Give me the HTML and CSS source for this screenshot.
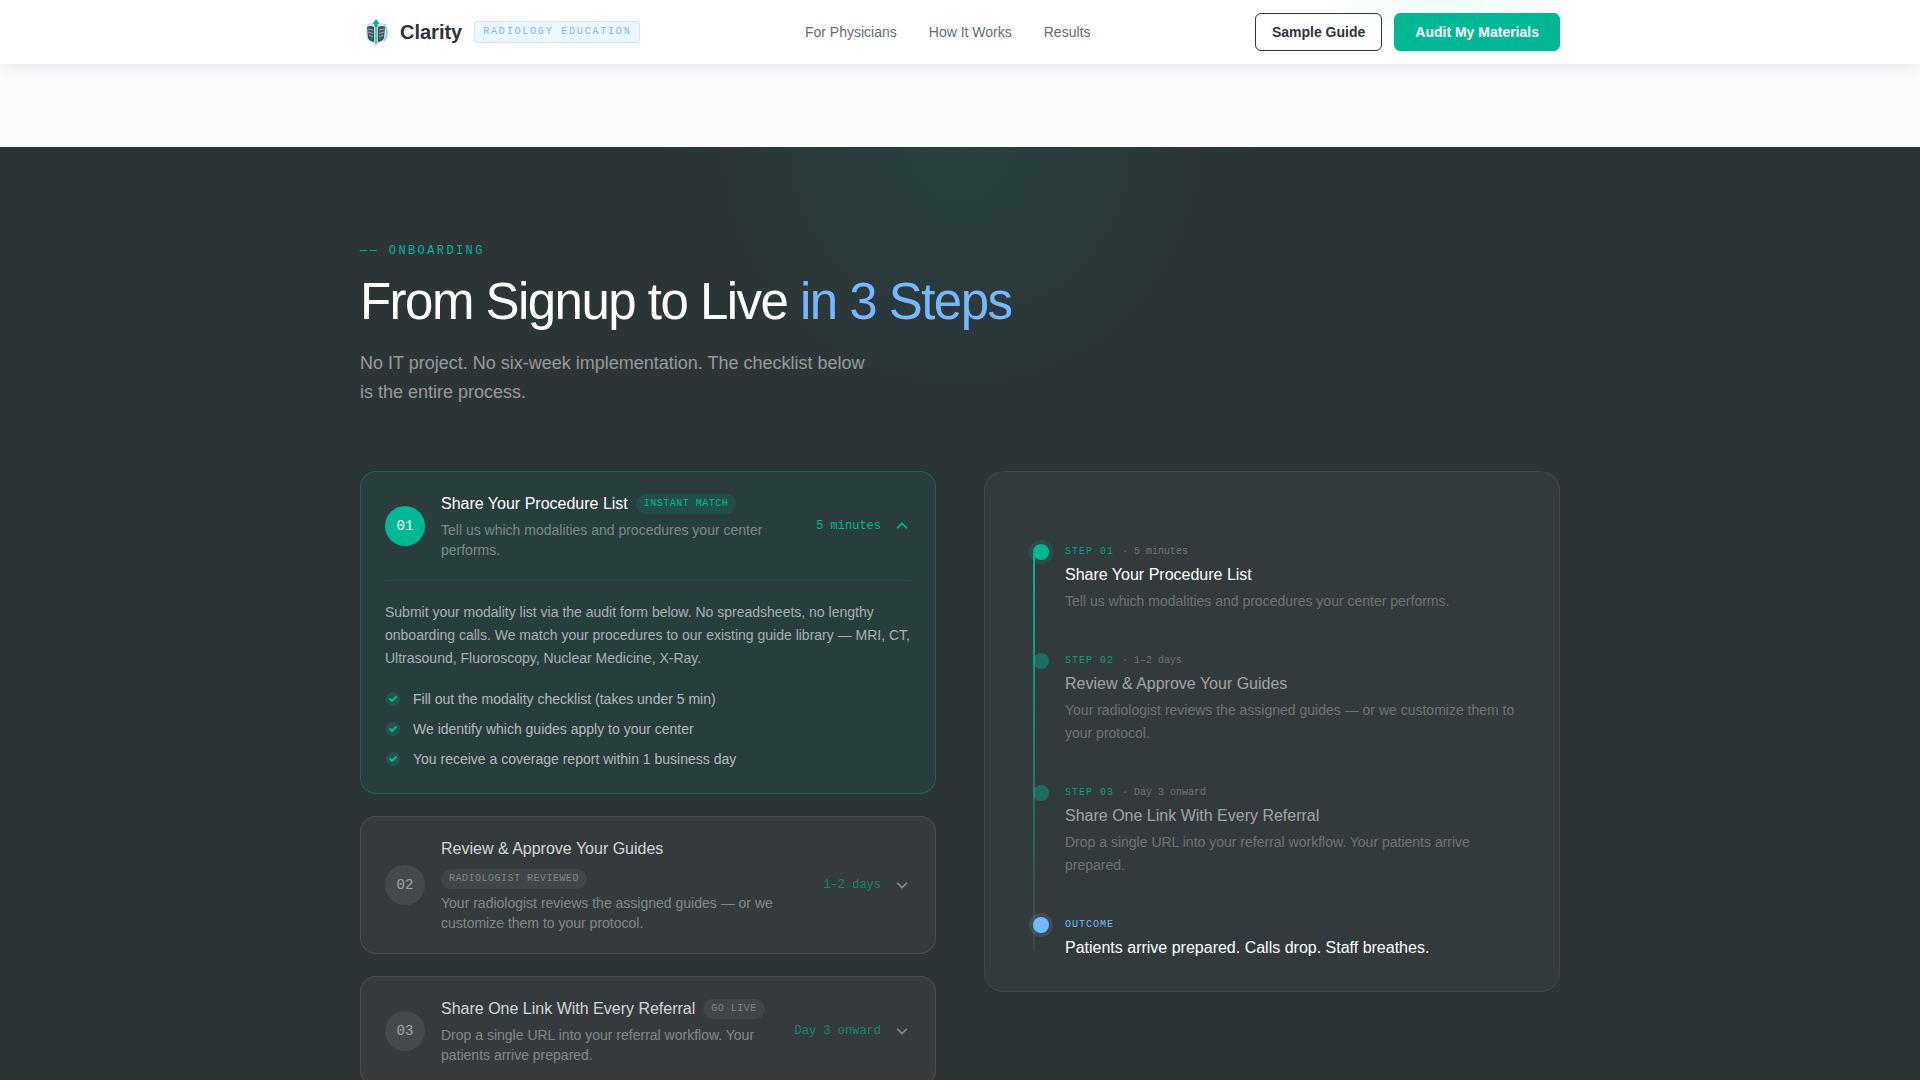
FILE: index.html
```html
<!DOCTYPE html>
<html lang="en">
<head>
    <meta charset="utf-8">
    <title>Clarity</title>
    <link rel="stylesheet" href="styles.css">
</head>
<body>
    <header class="site-header">
        <div class="container header-row">
            <a class="brand" href="#">
                <svg class="brand-logo" viewBox="0 0 32 32" aria-hidden="true">
                    <path d="M16 4 L25 8 Q30 16 26 24 L16 28 L7 24 Q5 16 7 8 Z" fill="#c9ecf4"/>
                    <path d="M24 8 Q30 16 24 25" fill="none" stroke="#93cdea" stroke-width="1.500"/>
                    <path d="M7 11 Q10 9 14 11 V26 Q9 25 8 22 Z M18 11 Q22 9 25 11 L24 22 Q23 25 18 26 Z" fill="#44535b"/>
                    <path d="M8 13 l5 1 M8 16 l5 1.500 M9 19 l4 2 M24 13 l-5 1 M24 16 l-5 1.500 M23 19 l-4 2" stroke="#a3b3ba" stroke-width="1"/>
                    <path d="M15 9 h2.500 V27 L16 29 L14.500 27 Z" fill="#5cc4b8"/>
                    <path d="M16 3 l3.500 5 h-2 v3 h-3 v-3 h-2 Z" fill="#1da893"/>
                </svg>
                <span class="brand-name">Clarity</span>
                <span class="brand-tag">RADIOLOGY EDUCATION</span>
            </a>
            <nav class="main-nav">
                <a href="#physicians">For Physicians</a>
                <a href="#how">How It Works</a>
                <a href="#results">Results</a>
            </nav>
            <div class="header-actions">
                <button class="btn btn-outline">Sample Guide</button>
                <button class="btn btn-primary">Audit My Materials</button>
            </div>
        </div>
    </header>

    <main>
        <section class="onboarding" id="how">
            <div class="container">
                <p class="eyebrow">—— ONBOARDING</p>
                <h2 class="heading">From Signup to Live <span>in 3 Steps</span></h2>
                <p class="subheading">No IT project. No six-week implementation. The checklist below is the entire process.</p>

                <div class="columns">
                    <div class="steps">
                        <article class="step active">
                            <button class="step-head" aria-expanded="true">
                                <span class="step-num">01</span>
                                <span class="step-text">
                                    <span class="step-title-row">
                                        <span class="step-title">Share Your Procedure List</span>
                                        <span class="pill">INSTANT MATCH</span>
                                    </span>
                                    <span class="step-desc">Tell us which modalities and procedures your center performs.</span>
                                </span>
                                <span class="step-time">5 minutes</span>
                                <svg class="chevron" viewBox="0 0 16 16" aria-hidden="true"><path d="M3 10 l5 -5 l5 5"/></svg>
                            </button>
                            <div class="step-body">
                                <p>Submit your modality list via the audit form below. No spreadsheets, no lengthy onboarding calls. We match your procedures to our existing guide library — MRI, CT, Ultrasound, Fluoroscopy, Nuclear Medicine, X-Ray.</p>
                                <ul class="checklist">
                                    <li><svg viewBox="0 0 16 16" aria-hidden="true"><circle cx="8" cy="8" r="7"/><path d="M5 8 l2 2 l4 -4"/></svg>Fill out the modality checklist (takes under 5 min)</li>
                                    <li><svg viewBox="0 0 16 16" aria-hidden="true"><circle cx="8" cy="8" r="7"/><path d="M5 8 l2 2 l4 -4"/></svg>We identify which guides apply to your center</li>
                                    <li><svg viewBox="0 0 16 16" aria-hidden="true"><circle cx="8" cy="8" r="7"/><path d="M5 8 l2 2 l4 -4"/></svg>You receive a coverage report within 1 business day</li>
                                </ul>
                            </div>
                        </article>

                        <article class="step">
                            <button class="step-head" aria-expanded="false">
                                <span class="step-num">02</span>
                                <span class="step-text">
                                    <span class="step-title-row">
                                        <span class="step-title">Review &amp; Approve Your Guides</span>
                                        <span class="pill">RADIOLOGIST REVIEWED</span>
                                    </span>
                                    <span class="step-desc">Your radiologist reviews the assigned guides — or we customize them to your protocol.</span>
                                </span>
                                <span class="step-time">1–2 days</span>
                                <svg class="chevron" viewBox="0 0 16 16" aria-hidden="true"><path d="M3 6 l5 5 l5 -5"/></svg>
                            </button>
                        </article>

                        <article class="step">
                            <button class="step-head" aria-expanded="false">
                                <span class="step-num">03</span>
                                <span class="step-text">
                                    <span class="step-title-row">
                                        <span class="step-title">Share One Link With Every Referral</span>
                                        <span class="pill">GO LIVE</span>
                                    </span>
                                    <span class="step-desc">Drop a single URL into your referral workflow. Your patients arrive prepared.</span>
                                </span>
                                <span class="step-time">Day 3 onward</span>
                                <svg class="chevron" viewBox="0 0 16 16" aria-hidden="true"><path d="M3 6 l5 5 l5 -5"/></svg>
                            </button>
                        </article>
                    </div>

                    <ol class="timeline">
                        <li class="current">
                            <span class="dot"></span>
                            <div>
                                <p class="meta"><span>STEP 01</span>· 5 minutes</p>
                                <h3>Share Your Procedure List</h3>
                                <p class="desc">Tell us which modalities and procedures your center performs.</p>
                            </div>
                        </li>
                        <li>
                            <span class="dot"></span>
                            <div>
                                <p class="meta"><span>STEP 02</span>· 1–2 days</p>
                                <h3>Review &amp; Approve Your Guides</h3>
                                <p class="desc">Your radiologist reviews the assigned guides — or we customize them to your protocol.</p>
                            </div>
                        </li>
                        <li>
                            <span class="dot"></span>
                            <div>
                                <p class="meta"><span>STEP 03</span>· Day 3 onward</p>
                                <h3>Share One Link With Every Referral</h3>
                                <p class="desc">Drop a single URL into your referral workflow. Your patients arrive prepared.</p>
                            </div>
                        </li>
                        <li class="outcome">
                            <span class="dot"></span>
                            <div>
                                <p class="meta"><span>OUTCOME</span></p>
                                <h3>Patients arrive prepared. Calls drop. Staff breathes.</h3>
                            </div>
                        </li>
                    </ol>
                </div>
            </div>
        </section>
    </main>
</body>
</html>
```

FILE: styles.css
```css
:root {
    --dark: #2d3436;
    --green: #00b894;
    --blue: #74b9ff;
    --sans: "Liberation Sans", Arial, sans-serif;
    --mono: "Liberation Mono", "Courier New", monospace;
}

* {
    box-sizing: border-box;
    margin: 0;
    padding: 0;
}

body {
    background-color: #fbfcfe;
    color: var(--dark);
    font-family: var(--sans);
    font-size: 14px;
    line-height: 20px;
}

button {
    font: inherit;
    color: inherit;
    cursor: pointer;
}

a {
    color: inherit;
    text-decoration: none;
}

.container {
    max-width: 1200px;
    margin: 0 auto;
}

/* header */

.site-header {
    position: sticky;
    top: 0;
    z-index: 10;
    background: radial-gradient(ellipse 120px 40px at 75% 0, #eefaf7, #fff);
    box-shadow: 0 2px 16px rgba(45, 52, 54, 0.12);
}

.header-row {
    display: flex;
    align-items: center;
    justify-content: space-between;
    height: 64px;
}

.brand {
    display: flex;
    align-items: center;
    gap: 8px;
}

.brand-logo {
    width: 32px;
    height: 32px;
}

.brand-name {
    font-size: 20px;
    font-weight: bold;
}

.brand-tag {
    margin-left: 4px;
    padding: 0 8px;
    border: 1px solid #cfe6ff;
    border-radius: 3px;
    background-color: #eef6ff;
    color: var(--blue);
    font-family: var(--mono);
    font-size: 10px;
    letter-spacing: 0.18em;
}

.main-nav {
    display: flex;
    gap: 32px;
    color: #636e72;
}

.header-actions {
    display: flex;
    gap: 12px;
}

.btn {
    height: 38px;
    border: 1px solid var(--dark);
    border-radius: 6px;
    font-weight: bold;
}

.btn-outline {
    padding: 0 16px;
    background: none;
}

.btn-primary {
    padding: 0 20px;
    border-color: var(--green);
    background-color: var(--green);
    color: #fff;
}

/* onboarding */

.onboarding {
    margin-top: 83px;
    padding: 96px 0;
    background: radial-gradient(ellipse 300px 300px at 50% 0, rgba(0, 184, 148, 0.09), transparent) var(--dark);
    color: #fff;
}

.eyebrow {
    margin-bottom: 16px;
    color: var(--green);
    font-family: var(--mono);
    font-size: 12px;
    line-height: 16px;
    letter-spacing: 0.2em;
}

.heading {
    margin-bottom: 20px;
    font-size: 51px;
    font-weight: normal;
    line-height: 54px;
    letter-spacing: -0.03em;
}

.heading span {
    color: var(--blue);
}

.subheading {
    max-width: 520px;
    margin-bottom: 64px;
    color: rgba(255, 255, 255, 0.5);
    font-size: 18px;
    line-height: 29px;
}

.columns {
    display: grid;
    grid-template-columns: 1fr 1fr;
    align-items: start;
    gap: 48px;
}

.steps {
    display: grid;
    gap: 22px;
}

.step {
    border: 1px solid rgba(255, 255, 255, 0.1);
    border-radius: 16px;
    background-color: rgba(255, 255, 255, 0.04);
}

.step-head {
    display: flex;
    align-items: center;
    width: 100%;
    padding: 20px 24px;
    border: none;
    background: none;
    text-align: left;
}

.step-num {
    flex: none;
    width: 40px;
    margin-right: 16px;
    border-radius: 50%;
    background-color: rgba(255, 255, 255, 0.08);
    color: rgba(255, 255, 255, 0.5);
    font-family: var(--mono);
    line-height: 40px;
    text-align: center;
}

.step-text {
    flex: 1;
}

.step-title-row {
    display: flex;
    flex-wrap: wrap;
    align-items: center;
    gap: 8px;
    margin-bottom: 4px;
}

.step-title {
    color: rgba(255, 255, 255, 0.8);
    font-size: 16px;
    line-height: 24px;
}

.pill {
    padding: 0 8px;
    border-radius: 10px;
    background-color: rgba(255, 255, 255, 0.06);
    color: rgba(255, 255, 255, 0.35);
    font-family: var(--mono);
    font-size: 10px;
    letter-spacing: 0.05em;
}

.step-desc {
    display: block;
    color: rgba(255, 255, 255, 0.4);
}

.step-time {
    margin: 0 14px 0 16px;
    color: var(--green);
    font-family: var(--mono);
    font-size: 12px;
    opacity: 0.6;
}

.chevron {
    flex: none;
    width: 14px;
    height: 14px;
    margin-right: 2px;
    fill: none;
    stroke: rgba(255, 255, 255, 0.4);
    stroke-width: 2;
    stroke-linecap: round;
    stroke-linejoin: round;
}

.step.active {
    border-color: rgba(0, 184, 148, 0.3);
    background-color: rgba(0, 184, 148, 0.08);
}

.active .step-num {
    background-color: var(--green);
    color: #fff;
}

.active .step-title {
    color: #fff;
}

.active .pill {
    background-color: rgba(0, 184, 148, 0.15);
    color: var(--green);
}

.active .step-time {
    opacity: 1;
}

.active .chevron {
    stroke: var(--green);
}

.step-body {
    margin: 0 24px;
    padding: 20px 0 24px;
    border-top: 1px solid rgba(0, 184, 148, 0.15);
    color: rgba(255, 255, 255, 0.6);
    line-height: 23px;
}

.checklist {
    display: grid;
    gap: 10px;
    margin-top: 19px;
    color: rgba(255, 255, 255, 0.65);
    line-height: 20px;
    list-style: none;
}

.checklist li {
    display: flex;
    align-items: center;
    gap: 12px;
}

.checklist svg {
    width: 16px;
    height: 16px;
    fill: none;
    stroke: var(--green);
    stroke-width: 2;
    stroke-linecap: round;
    stroke-linejoin: round;
}

.checklist circle {
    fill: rgba(0, 184, 148, 0.2);
    stroke: none;
}

/* timeline */

.timeline {
    position: relative;
    padding: 32px 40px 28px 48px;
    border: 1px solid rgba(255, 255, 255, 0.08);
    border-radius: 20px;
    background-color: rgba(255, 255, 255, 0.03);
    list-style: none;
}

.timeline::before {
    content: "";
    position: absolute;
    top: 80px;
    bottom: 40px;
    left: 48px;
    width: 2px;
    background: linear-gradient(var(--green), rgba(0, 184, 148, 0.6) 50%, rgba(255, 255, 255, 0.05));
}

.timeline li {
    display: flex;
    gap: 16px;
    padding-top: 40px;
}

.dot {
    flex: none;
    width: 16px;
    height: 16px;
    border-radius: 50%;
    background-color: rgba(0, 184, 148, 0.4);
}

.meta {
    color: rgba(255, 255, 255, 0.3);
    font-family: var(--mono);
    font-size: 10px;
    line-height: 16px;
}

.meta span {
    margin-right: 8px;
    color: var(--green);
    letter-spacing: 0.1em;
    opacity: 0.8;
}

.timeline h3 {
    margin: 3px 0;
    color: rgba(255, 255, 255, 0.55);
    font-size: 16px;
    font-weight: normal;
    line-height: 24px;
}

.desc {
    color: rgba(255, 255, 255, 0.3);
    line-height: 23px;
}

.timeline .current h3,
.timeline .outcome h3 {
    color: #fff;
}

.current .dot {
    background-color: var(--green);
    box-shadow: 0 0 0 4px rgba(0, 184, 148, 0.15);
}

.outcome .dot {
    background-color: var(--blue);
    box-shadow: 0 0 0 4px rgba(116, 185, 255, 0.15);
}

.outcome .meta span {
    color: var(--blue);
    opacity: 1;
}
```
